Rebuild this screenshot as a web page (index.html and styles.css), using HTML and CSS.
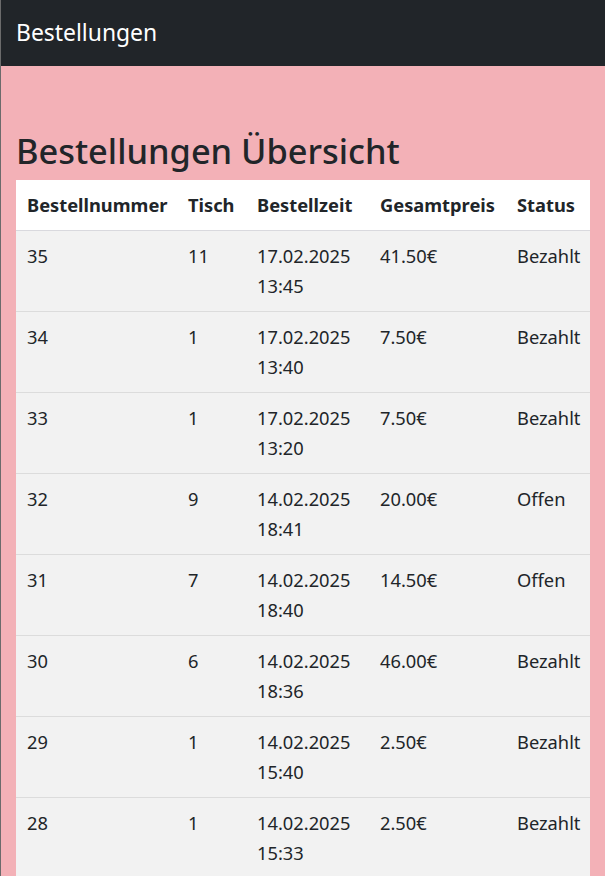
FILE: index.html
```html
<!DOCTYPE html>
<html lang="de">
<head>
<meta charset="utf-8">
<title>Bestellungen</title>
<link rel="stylesheet" href="styles.css">
</head>
<body>
<nav class="navbar">
  <div class="container">
    <span class="brand">Bestellungen</span>
  </div>
</nav>
<main class="container main">
  <h1 class="title">Bestellungen Übersicht</h1>
  <table class="orders">
    <colgroup>
      <col class="c1"><col class="c2"><col class="c3"><col class="c4"><col class="c5">
    </colgroup>
    <thead>
      <tr><th>Bestellnummer</th><th>Tisch</th><th>Bestellzeit</th><th>Gesamtpreis</th><th>Status</th></tr>
    </thead>
    <tbody>
      <tr><td>35</td><td>11</td><td>17.02.2025 13:45</td><td>41.50€</td><td>Bezahlt</td></tr>
      <tr><td>34</td><td>1</td><td>17.02.2025 13:40</td><td>7.50€</td><td>Bezahlt</td></tr>
      <tr><td>33</td><td>1</td><td>17.02.2025 13:20</td><td>7.50€</td><td>Bezahlt</td></tr>
      <tr><td>32</td><td>9</td><td>14.02.2025 18:41</td><td>20.00€</td><td>Offen</td></tr>
      <tr><td>31</td><td>7</td><td>14.02.2025 18:40</td><td>14.50€</td><td>Offen</td></tr>
      <tr><td>30</td><td>6</td><td>14.02.2025 18:36</td><td>46.00€</td><td>Bezahlt</td></tr>
      <tr><td>29</td><td>1</td><td>14.02.2025 15:40</td><td>2.50€</td><td>Bezahlt</td></tr>
      <tr><td>28</td><td>1</td><td>14.02.2025 15:33</td><td>2.50€</td><td>Bezahlt</td></tr>
    </tbody>
  </table>
</main>
</body>
</html>
```
FILE: styles.css
```css
* { box-sizing: border-box; }
html, body { margin: 0; padding: 0; }
body {
  background: #f3b1b7;
  color: #212529;
  font-family: "Segoe UI", "Noto Sans", "Open Sans", sans-serif;
  font-size: 18.3px;
  line-height: 30px;
  border-left: 1px solid #6b6b6b;
  min-height: 876px;
}
.container {
  padding: 0 15px;
}
.navbar {
  background: #212529;
  height: 66px;
  display: flex;
  align-items: center;
}
.brand {
  color: #fff;
  font-size: 22.9px;
  line-height: 37px;
  display: block;
  padding-bottom: 1px;
}
.main {
  padding-top: 60px;
}
.title {
  margin: 0 0 10px;
  font-size: 34.4px;
  font-weight: 500;
  line-height: 44px;
  height: 44px;
  padding-top: 3px;
}
.orders {
  width: 100%;
  border-collapse: collapse;
  table-layout: fixed;
  background: #f2f2f2;
}
.c1 { width: 161px; }
.c2 { width: 69px; }
.c3 { width: 123px; }
.c4 { width: 137px; }
.c5 { width: auto; }
.orders th, .orders td {
  padding: 10px 10px 10px 11px;
  text-align: left;
  vertical-align: top;
  border-bottom: 1px solid #dcdcdc;
}
.orders th {
  background: #fff;
  font-weight: 700;
  white-space: nowrap;
  border-bottom-color: #d9d9de;
}
.orders td {
  font-weight: 400;
}
```
